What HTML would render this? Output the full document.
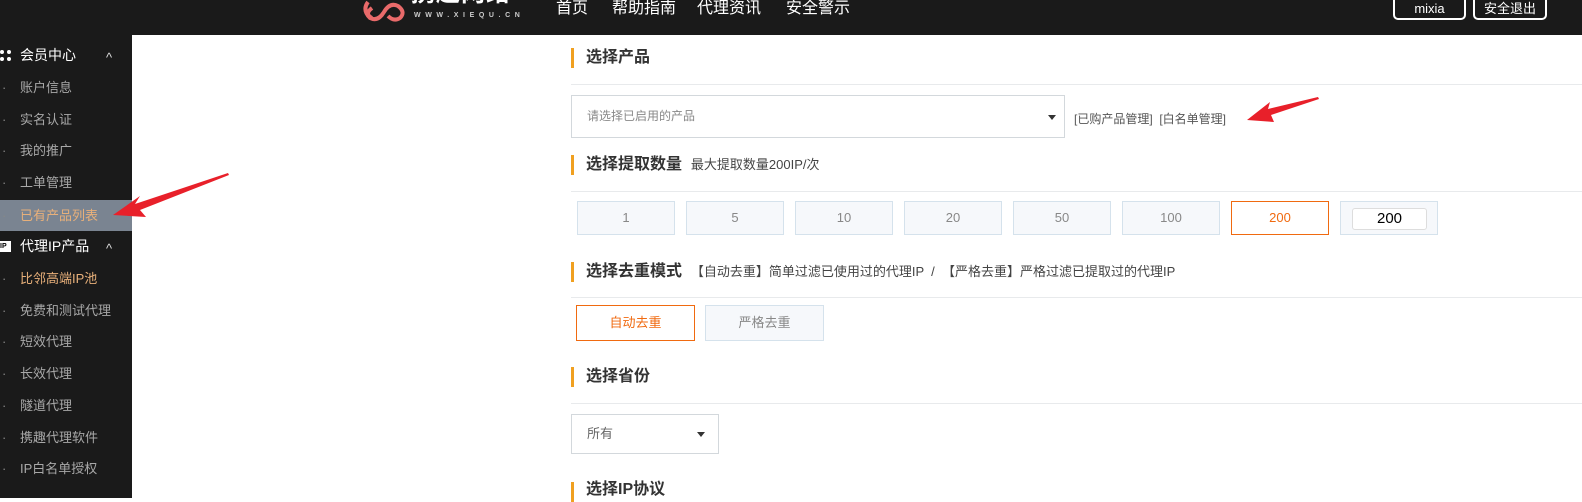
<!DOCTYPE html>
<html><head><meta charset="utf-8"><style>
*{margin:0;padding:0;box-sizing:border-box}
body{width:1582px;height:498px;overflow:hidden;background:#fff;font-family:"Liberation Sans","Noto Sans CJK SC",sans-serif;position:relative}
.top{position:absolute;left:0;top:0;width:1582px;height:35px;background:#1a1a1a;overflow:hidden}
.side{position:absolute;left:0;top:35px;width:132px;height:463px;background:#1a1a1a}
.a{position:absolute}
.nav{position:absolute;top:-6px;color:#fff;font-size:16px}
.si{position:absolute;left:0;width:132px;height:31px;line-height:31px;color:#a8a8a8;font-size:13px;padding-left:20px}
.si:before{content:"·";position:absolute;left:2px;color:#888}
.sh{position:absolute;left:0;width:132px;height:31px;line-height:31px;color:#fff;font-size:14px;padding-left:20px}
.sh .ch{position:absolute;left:106px;top:2px;font-size:13px;color:#ddd}
.bar{position:absolute;left:571px;width:3px;height:20px;background:#f0a020}
.tt{position:absolute;left:586px;font-size:16px;font-weight:bold;color:#333;line-height:20px}
.ln{position:absolute;left:571px;width:1011px;height:1px;background:#e8eaec}
.b{position:absolute;top:201px;width:98px;height:34px;background:#f6f8fb;border:1px solid #d5e2ec;color:#888;font-size:13px;text-align:center;line-height:32px}
.sub{font-size:13px;color:#444;font-weight:normal}
</style></head><body>
<div class="top">
 <svg class="a" style="left:360px;top:0" width="50" height="22"><path d="M8 2 Q2 10 10 18 Q18 22 24 12 Q30 2 38 6 Q46 12 40 18 Q34 22 28 16 M12 8 Q4 14 12 18" fill="none" stroke="#e96a6a" stroke-width="4"/></svg>
 <div class="a" style="left:411px;top:-20px;color:#fff;font-size:24px;line-height:28px;font-weight:bold;letter-spacing:1px">携趣网络</div>
 <div class="a" style="left:414px;top:11px;color:#ccc;font-size:7px;line-height:9px;letter-spacing:4.6px;font-weight:bold">WWW.XIEQU.CN</div>
 <div class="nav" style="left:556px">首页</div>
 <div class="nav" style="left:612px">帮助指南</div>
 <div class="nav" style="left:697px">代理资讯</div>
 <div class="nav" style="left:786px">安全警示</div>
 <div class="a" style="left:1393px;top:-8px;width:73px;height:28px;border:2px solid #fff;border-radius:5px;color:#fff;font-size:13px;text-align:center;line-height:30px">mixia</div>
 <div class="a" style="left:1473px;top:-8px;width:74px;height:28px;border:2px solid #fff;border-radius:5px;color:#fff;font-size:13px;text-align:center;line-height:30px">安全退出</div>
</div>
<div class="side">
 <div class="sh" style="top:5px"><span class="a" style="left:0;top:10px;width:11px;height:11px;border-left:4px dotted #fff;border-right:4px dotted #fff"></span>会员中心<span class="ch">^</span></div>
 <div class="si" style="top:37px">账户信息</div>
 <div class="si" style="top:69px">实名认证</div>
 <div class="si" style="top:100px">我的推广</div>
 <div class="si" style="top:132px">工单管理</div>
 <div class="si" style="top:165px;background:#7a8491;color:#e8b07a">已有产品列表</div>
 <div class="sh" style="top:196px"><span class="a" style="left:0;top:10px;width:11px;height:11px;background:#fff;font-size:7px;color:#000;line-height:11px;font-weight:bold">IP</span>代理IP产品<span class="ch">^</span></div>
 <div class="si" style="top:228px;color:#e8b07a">比邻高端IP池</div>
 <div class="si" style="top:260px">免费和测试代理</div>
 <div class="si" style="top:291px">短效代理</div>
 <div class="si" style="top:323px">长效代理</div>
 <div class="si" style="top:355px">隧道代理</div>
 <div class="si" style="top:387px">携趣代理软件</div>
 <div class="si" style="top:418px">IP白名单授权</div>
</div>

<div class="bar" style="top:48px"></div><div class="tt" style="top:48px">选择产品</div>
<div class="ln" style="top:84px"></div>
<div class="a" style="left:571px;top:95px;width:494px;height:43px;border:1px solid #d3d8dc;font-size:12px;color:#888;line-height:41px;padding-left:15px">请选择已启用的产品<span class="a" style="left:476px;top:19px;border:4px solid transparent;border-top:5px solid #333"></span></div>
<div class="a" style="left:1074px;top:110px;font-size:12px;color:#555">[已购产品管理] &nbsp;[白名单管理]</div>

<div class="bar" style="top:155px"></div><div class="tt" style="top:155px">选择提取数量 &nbsp;<span class="sub">最大提取数量200IP/次</span></div>
<div class="ln" style="top:191px"></div>
<div class="b" style="left:577px">1</div>
<div class="b" style="left:686px">5</div>
<div class="b" style="left:795px">10</div>
<div class="b" style="left:904px">20</div>
<div class="b" style="left:1013px">50</div>
<div class="b" style="left:1122px">100</div>
<div class="b" style="left:1231px;background:#fff;border-color:#f06a10;color:#f06a10">200</div>
<div class="b" style="left:1340px"><div class="a" style="left:11px;top:6px;width:75px;height:22px;background:#fff;border:1px solid #ddd;border-radius:3px;color:#000;font-size:15px;line-height:20px">200</div></div>

<div class="bar" style="top:262px"></div><div class="tt" style="top:262px">选择去重模式 &nbsp;<span class="sub">【自动去重】简单过滤已使用过的代理IP &nbsp;/ &nbsp;【严格去重】严格过滤已提取过的代理IP</span></div>
<div class="ln" style="top:297px"></div>
<div class="b" style="left:576px;top:305px;width:119px;height:36px;line-height:34px;background:#fff;border-color:#f06a10;color:#f06a10">自动去重</div>
<div class="b" style="left:705px;top:305px;width:119px;height:36px;line-height:34px">严格去重</div>

<div class="bar" style="top:367px"></div><div class="tt" style="top:367px">选择省份</div>
<div class="ln" style="top:403px"></div>
<div class="a" style="left:571px;top:414px;width:148px;height:40px;border:1px solid #d3d8dc;font-size:13px;color:#666;line-height:38px;padding-left:15px">所有<span class="a" style="left:125px;top:17px;border:4px solid transparent;border-top:5px solid #333"></span></div>

<div class="bar" style="top:482px"></div><div class="tt" style="top:480px">选择IP协议</div>

<svg class="a" style="left:0;top:0" width="1582" height="498">
 <polygon points="228,173 135,204 140,196 113,215 146,217 140,210 229,175" fill="#e8202a"/>
 <polygon points="1318,97 1268,109 1270,102 1247,120 1274,122 1271,115 1319,99" fill="#e8202a"/>
</svg>
</body></html>
